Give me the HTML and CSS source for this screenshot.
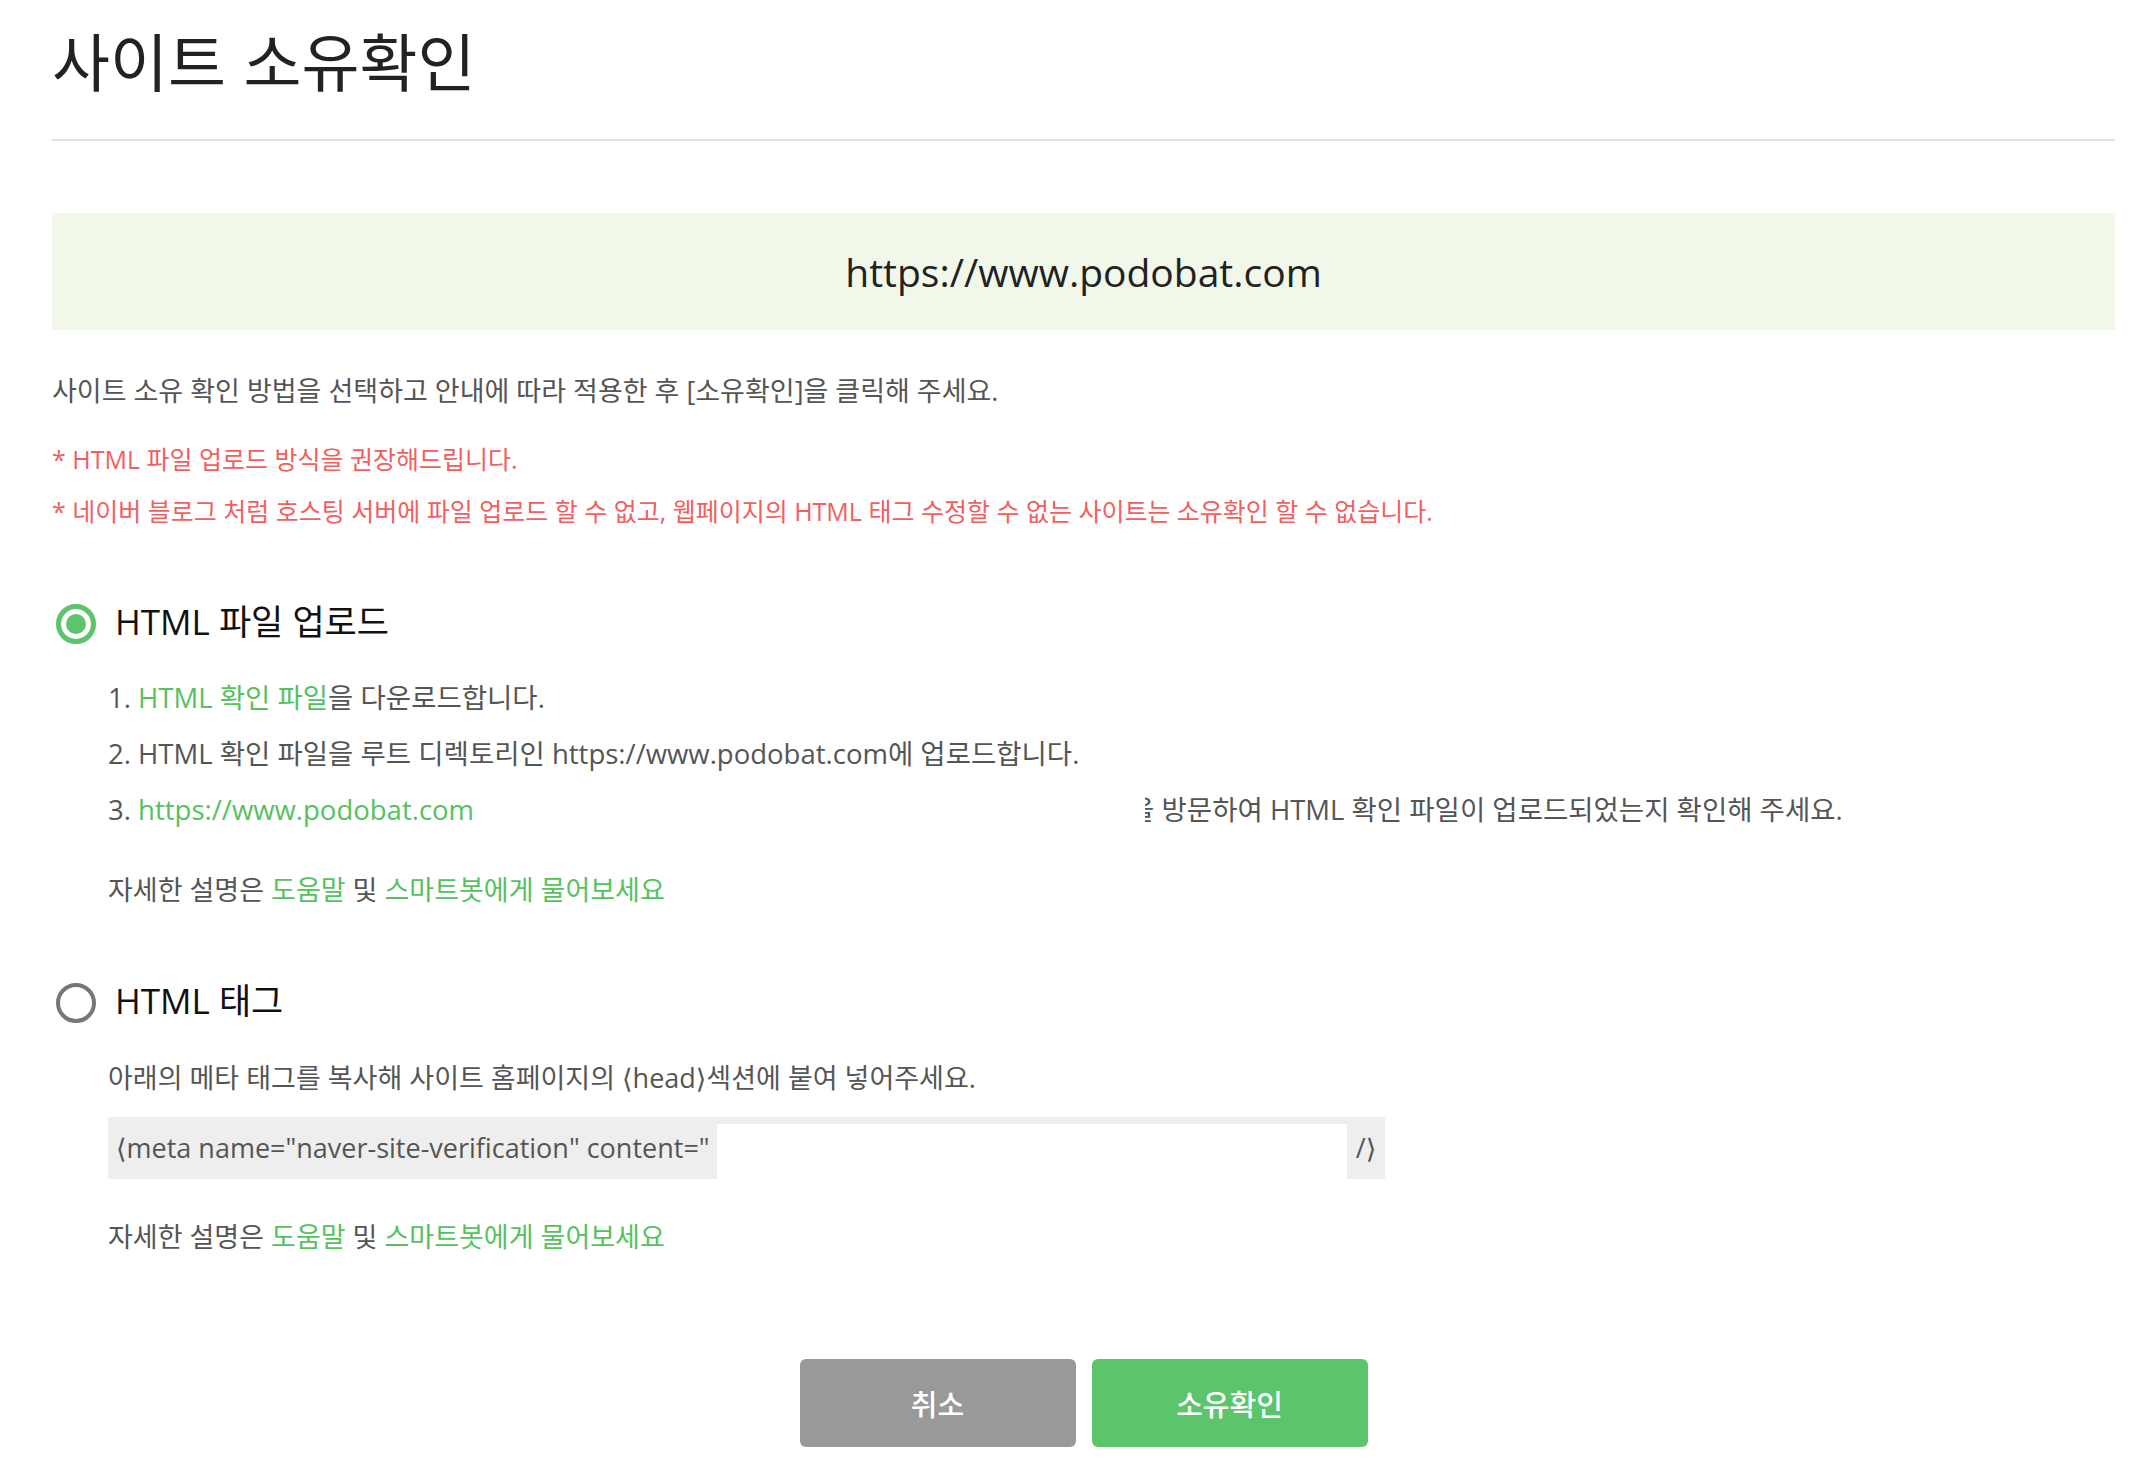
FILE: index.html
```
<!DOCTYPE html>
<html lang="ko">
<head>
<meta charset="utf-8">
<title>사이트 소유확인</title>
<link rel="stylesheet" href="styles.css">
</head>
<body>
<div class="page">
  <header class="head">
    <h1 class="title">사이트 소유확인</h1>
  </header>

  <div class="url-box">https://www.podobat.com</div>

  <p class="desc">사이트 소유 확인 방법을 선택하고 안내에 따라 적용한 후 [소유확인]을 클릭해 주세요.</p>
  <p class="warn warn-first">* HTML 파일 업로드 방식을 권장해드립니다.</p>
  <p class="warn">* 네이버 블로그 처럼 호스팅 서버에 파일 업로드 할 수 없고, 웹페이지의 HTML 태그 수정할 수 없는 사이트는 소유확인 할 수 없습니다.</p>

  <section class="method">
    <div class="method-head">
      <span class="radio radio-on"></span>
      <span class="method-name">HTML 파일 업로드</span>
    </div>
    <ol class="steps">
      <li>1. <a class="link">HTML 확인 파일</a>을 다운로드합니다.</li>
      <li>2. HTML 확인 파일을 루트 디렉토리인 https://www.podobat.com에 업로드합니다.</li>
      <li>3. <a class="link">https://www.podobat.com</a><span class="redact"></span><span class="masked">을</span> 방문하여 HTML 확인 파일이 업로드되었는지 확인해 주세요.</li>
    </ol>
    <p class="help">자세한 설명은 <a class="link">도움말</a> 및 <a class="link">스마트봇에게 물어보세요</a></p>
  </section>

  <section class="method method-tag">
    <div class="method-head">
      <span class="radio"></span>
      <span class="method-name">HTML 태그</span>
    </div>
    <p class="tag-desc">아래의 메타 태그를 복사해 사이트 홈페이지의 ⟨head⟩섹션에 붙여 넣어주세요.</p>
    <div class="meta-box">
      <span class="meta-pre">⟨meta name="naver-site-verification" content="</span>
      <span class="meta-field"></span>
      <span class="meta-post">/⟩</span>
    </div>
    <p class="help help-tag">자세한 설명은 <a class="link">도움말</a> 및 <a class="link">스마트봇에게 물어보세요</a></p>
  </section>

  <div class="actions">
    <button class="btn btn-cancel" type="button">취소</button>
    <button class="btn btn-ok" type="button">소유확인</button>
  </div>
</div>
</body>
</html>
```

FILE: styles.css
```
html, body {
  margin: 0;
  padding: 0;
  background: #fff;
}

.page {
  padding: 0 39px 40px 52px;
  font-family: "Open Sans", "Noto Sans CJK KR", "DejaVu Sans", sans-serif;
  color: #555;
}

.head {
  padding: 23px 0 44px;
  border-bottom: 2px solid #e2e2e2;
}

.title {
  margin: 0;
  font-family: "Noto Sans CJK KR", sans-serif;
  font-weight: 400;
  font-size: 63px;
  line-height: 72px;
  color: #222;
}

.url-box {
  margin-top: 72px;
  height: 117px;
  line-height: 117px;
  background: #f1f8ea;
  text-align: center;
  font-size: 39px;
  color: #222;
}

.desc {
  margin: 43px 0 0;
  font-size: 27px;
  line-height: 36px;
  color: #555;
}

.warn {
  margin: 16px 0 0;
  font-size: 25px;
  line-height: 36px;
  color: #f15f5f;
}

.warn-first {
  margin-top: 32px;
}

.method-head {
  display: flex;
  align-items: center;
  gap: 19px;
  height: 44px;
  margin-top: 73px;
  padding-left: 4px;
}

.method-tag .method-head {
  margin-top: 73px;
}

.radio {
  box-sizing: border-box;
  width: 40px;
  height: 40px;
  border: 4px solid #777;
  border-radius: 50%;
  display: flex;
  align-items: center;
  justify-content: center;
}

.radio-on {
  border: 5px solid #5cc46a;
}

.radio-on::after {
  content: "";
  width: 20px;
  height: 20px;
  border-radius: 50%;
  background: #5cc46a;
}

.method-name {
  font-size: 35px;
  line-height: 40px;
  color: #111;
  position: relative;
  top: -2px;
}

.steps {
  list-style: none;
  margin: 24px 0 0;
  padding: 0 0 0 56px;
  font-size: 27.5px;
  line-height: 56px;
  color: #555;
}

.link {
  color: #55c160;
  text-decoration: none;
}

.redact {
  display: inline-block;
  width: 655px;
}

.masked {
  position: relative;
}

.masked::after {
  content: "";
  position: absolute;
  left: 0;
  top: 0;
  bottom: 0;
  width: 16px;
  background: #fff;
}

.help {
  margin: 34px 0 0 56px;
  font-size: 27px;
  line-height: 36px;
  color: #555;
}

.tag-desc {
  margin: 35px 0 0 56px;
  font-size: 27px;
  line-height: 36px;
  color: #555;
}

.meta-box {
  display: flex;
  width: 1277px;
  height: 62px;
  margin: 21px 0 0 56px;
  background: #eee;
  font-size: 27px;
  color: #555;
}

.meta-pre {
  box-sizing: border-box;
  width: 609px;
  padding-left: 8px;
  line-height: 62px;
  white-space: nowrap;
  overflow: hidden;
}

.meta-field {
  width: 630px;
  margin-top: 7px;
  background: #fff;
}

.meta-post {
  flex: 1;
  line-height: 62px;
  text-align: center;
}

.help-tag {
  margin-top: 40px;
}

.actions {
  display: flex;
  justify-content: center;
  gap: 16px;
  margin-top: 104px;
}

.btn {
  width: 276px;
  height: 88px;
  border: 0;
  border-radius: 6px;
  color: #fff;
  font-family: "Noto Sans CJK KR", sans-serif;
  font-weight: 500;
  font-size: 29px;
  cursor: pointer;
}

.btn-cancel {
  background: #999;
}

.btn-ok {
  background: #5cc46a;
}
```
